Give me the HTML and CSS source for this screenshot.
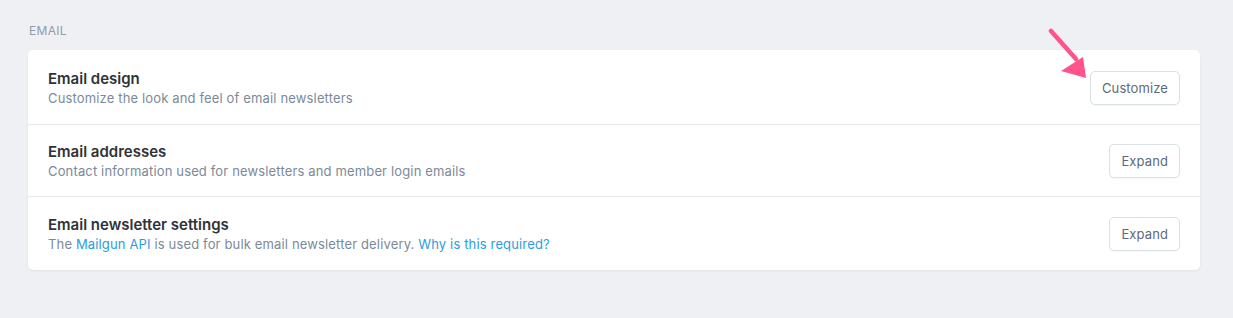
FILE: index.html
```html
<!DOCTYPE html>
<html lang="en">
<head>
    <meta charset="UTF-8">
    <meta name="viewport" content="width=device-width, initial-scale=1.0">
    <title>Email settings</title>
    <link rel="stylesheet" href="styles.css">
</head>
<body>

    <!-- Email settings section -->
    <div class="section">
        <h4 class="section-title">Email</h4>

        <div class="card">
            <div class="row">
                <div class="row-text">
                    <h5>Email design</h5>
                    <p>Customize the look and feel of email newsletters</p>
                </div>
                <button class="btn">Customize</button>
            </div>

            <div class="row">
                <div class="row-text">
                    <h5>Email addresses</h5>
                    <p>Contact information used for newsletters and member login emails</p>
                </div>
                <button class="btn">Expand</button>
            </div>

            <div class="row">
                <div class="row-text">
                    <h5>Email newsletter settings</h5>
                    <p>The <a href="#">Mailgun API</a> is used for bulk email newsletter delivery. <a href="#">Why is this required?</a></p>
                </div>
                <button class="btn">Expand</button>
            </div>
        </div>

        <!-- pink pointer arrow -->
        <svg class="pointer" width="50" height="56" viewBox="0 0 50 56">
            <line x1="3" y1="3" x2="28" y2="31" stroke="#ff5389" stroke-width="4.5" stroke-linecap="round"/>
            <polygon points="13,43 35,29 38,50" fill="#ff5389"/>
        </svg>
    </div>

</body>
</html>
```

FILE: styles.css
```css
body {
    margin: 0;
    background-color: #eff0f4;
    font-family: Inter, "Open Sans", sans-serif;
    color: #2f3337;
}
.section {
    position: relative;
    padding: 24px 33px 47px 28px;
}
.section-title {
    margin: 0 0 12px 1px;
    font-size: 12px;
    font-weight: 400;
    letter-spacing: 0.3px;
    text-transform: uppercase;
    color: #8e9cab;
    line-height: 14px;
}
.card {
    background: white;
    border-radius: 5px;
    box-shadow: 0 1px 3px rgba(0, 0, 0, 0.06);
}
.row {
    display: flex;
    align-items: center;
    justify-content: space-between;
    height: 73px;
    padding: 0 20px;
    border-top: 1px solid #e3e9ee;
}
.row:first-child {
    border-top: none;
    height: 72px;
    padding-top: 2px;
}
.row:nth-child(2) {
    height: 71px;
}
.row-text h5 {
    margin: 0;
    font-size: 15px;
    font-weight: 600;
    line-height: 20px;
    color: #2f3337;
}
.row-text p {
    margin: 0;
    font-size: 13px;
    letter-spacing: 0.15px;
    line-height: 18px;
    color: #7b8a98;
}
.row-text a {
    color: #2a9de0;
    text-decoration: none;
}
.btn {
    height: 34px;
    padding: 0 11px;
    background: white;
    border: 1px solid #d9e1e6;
    border-radius: 5px;
    box-shadow: 0 1px 1px rgba(0, 0, 0, 0.03);
    font-family: inherit;
    font-size: 13px;
    letter-spacing: 0.1px;
    color: #5c6b7a;
}
.pointer {
    position: absolute;
    left: 1048px;
    top: 28px;
}
```
